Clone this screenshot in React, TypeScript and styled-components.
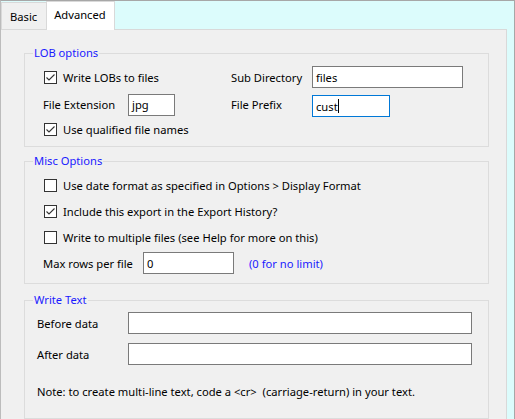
import React from "react";
import styled, { createGlobalStyle, css } from "styled-components";

const GlobalStyle = createGlobalStyle`
  html, body {
    margin: 0;
    padding: 0;
    background: #ffffff;
  }
  body {
    font-family: "Segoe UI", "Noto Sans", "Open Sans", sans-serif;
    font-size: 11.2px;
    color: #000000;
  }
`;

const Frame = styled.div`
  width: 515px;
  height: 419px;
  box-sizing: border-box;
  border-top: 1px solid #a7a7a7;
  border-right: 1px solid #a7a7a7;
  border-left: 1px solid #bcbcbc;
  background: #dcfcfc;
  display: flex;
  flex-direction: column;
  overflow: hidden;
`;

const TabStrip = styled.div`
  height: 28px;
  display: flex;
  align-items: flex-end;
  flex-shrink: 0;
`;

const Tab = styled.div<{ $active?: boolean }>`
  box-sizing: border-box;
  border: 1px solid #d9d9d9;
  border-bottom: none;
  display: flex;
  align-items: center;
  ${(p) =>
    p.$active
      ? css`
          height: 29px;
          margin-bottom: -1px;
          padding: 0 8px 4px 7px;
          background: #ffffff;
          position: relative;
          z-index: 1;
        `
      : css`
          height: 27px;
          padding: 0 9px 0 8px;
          background: #f0f0f0;
          border-right: none;
        `}
`;

const Panel = styled.div`
  flex: 1;
  margin-right: 7px;
  background: #f0f0f0;
  border: 1px solid #d9d9d9;
  border-left: none;
  border-bottom: none;
  padding: 15px 0 0 23px;
  display: flex;
  flex-direction: column;
`;

const Group = styled.fieldset<{ $height: number; $gapAbove?: number }>`
  box-sizing: border-box;
  width: 465px;
  height: ${(p) => p.$height}px;
  margin: ${(p) => p.$gapAbove ?? 0}px 0 0 0;
  padding: 0;
  border: 1px solid #dcdcdc;
  min-inline-size: 0;
`;

const Legend = styled.legend`
  margin-left: 8px;
  padding: 0 1px;
  line-height: 16px;
  color: #1a1aff;
`;

const LobGrid = styled.div`
  display: grid;
  grid-template-columns: 85px 103px 81px 1fr;
  grid-template-rows: 22px 27px 16px;
  row-gap: 3px;
  margin: 5px 0 0 18px;
  align-items: center;
`;

const Stack = styled.div<{ $gap: number; $top: number; $left: number }>`
  display: flex;
  flex-direction: column;
  gap: ${(p) => p.$gap}px;
  padding: ${(p) => p.$top}px 0 0 ${(p) => p.$left}px;
`;

const Row = styled.div`
  height: 22px;
  display: flex;
  align-items: center;
`;

const Label = styled.span<{ $width?: number }>`
  white-space: nowrap;
  ${(p) => p.$width && `width: ${p.$width}px; flex-shrink: 0;`}
`;

const Hint = styled.span`
  margin-left: 15px;
  color: #1a1aff;
`;

const Field = styled.div<{ $width: number; $focused?: boolean; $offset?: number }>`
  box-sizing: border-box;
  width: ${(p) => p.$width}px;
  height: 22px;
  background: #ffffff;
  border: 1px solid ${(p) => (p.$focused ? "#0078d7" : "#7a7a7a")};
  padding: 0 3px;
  display: flex;
  align-items: center;
  white-space: nowrap;
  ${(p) => p.$offset && `margin-top: ${p.$offset}px; align-self: start;`}
`;

const Caret = styled.span`
  display: inline-block;
  width: 1px;
  height: 14px;
  background: #000000;
`;

const CheckRow = styled.label<{ $span?: boolean }>`
  display: flex;
  align-items: center;
  gap: 6px;
  padding-left: 1px;
  white-space: nowrap;
  ${(p) => p.$span && `grid-column: 1 / 3;`}
`;

const Box = styled.span`
  box-sizing: border-box;
  width: 13px;
  height: 13px;
  border: 1px solid #333333;
  background: #ffffff;
  display: flex;
  align-items: center;
  justify-content: center;
  flex-shrink: 0;
`;

const Note = styled.div`
  margin: 19px 0 0 12px;
  line-height: 16px;
`;

const Check = ({ checked, children, span }: { checked?: boolean; children: React.ReactNode; span?: boolean }) => (
  <CheckRow $span={span}>
    <Box>
      {checked && (
        <svg width="11" height="11" viewBox="0 0 11 11">
          <path d="M1.5 5.5 L4 8 L9.5 2.5" fill="none" stroke="#333" strokeWidth="1.1" />
        </svg>
      )}
    </Box>
    {children}
  </CheckRow>
);

export default function App() {
  return (
    <>
      <GlobalStyle />
      <Frame>
        <TabStrip>
          <Tab>Basic</Tab>
          <Tab $active>Advanced</Tab>
        </TabStrip>
        <Panel>
          <Group $height={102}>
            <Legend>LOB options</Legend>
            <LobGrid>
              <Check checked span>
                Write LOBs to files
              </Check>
              <Label>Sub Directory</Label>
              <Field $width={151}>files</Field>
              <Label>File Extension</Label>
              <Field $width={47}>jpg</Field>
              <Label>File Prefix</Label>
              <Field $width={78} $focused $offset={4}>
                cust
                <Caret />
              </Field>
              <Check checked span>
                Use qualified file names
              </Check>
            </LobGrid>
          </Group>
          <Group $height={131} $gapAbove={6}>
            <Legend>Misc Options</Legend>
            <Stack $gap={4} $top={5} $left={18}>
              <Row>
                <Check>Use date format as specified in Options &gt; Display Format</Check>
              </Row>
              <Row>
                <Check checked>Include this export in the Export History?</Check>
              </Row>
              <Row>
                <Check>Write to multiple files (see Help for more on this)</Check>
              </Row>
              <Row>
                <Label $width={100}>Max rows per file</Label>
                <Field $width={91}>0</Field>
                <Hint>(0 for no limit)</Hint>
              </Row>
            </Stack>
          </Group>
          <Group $height={127} $gapAbove={8}>
            <Legend>Write Text</Legend>
            <Stack $gap={9} $top={4} $left={12}>
              <Row>
                <Label $width={91}>Before data</Label>
                <Field $width={344} />
              </Row>
              <Row>
                <Label $width={91}>After data</Label>
                <Field $width={344} />
              </Row>
            </Stack>
            <Note>Note: to create multi-line text, code a &lt;cr&gt;&nbsp; (carriage-return) in your text.</Note>
          </Group>
        </Panel>
      </Frame>
    </>
  );
}
